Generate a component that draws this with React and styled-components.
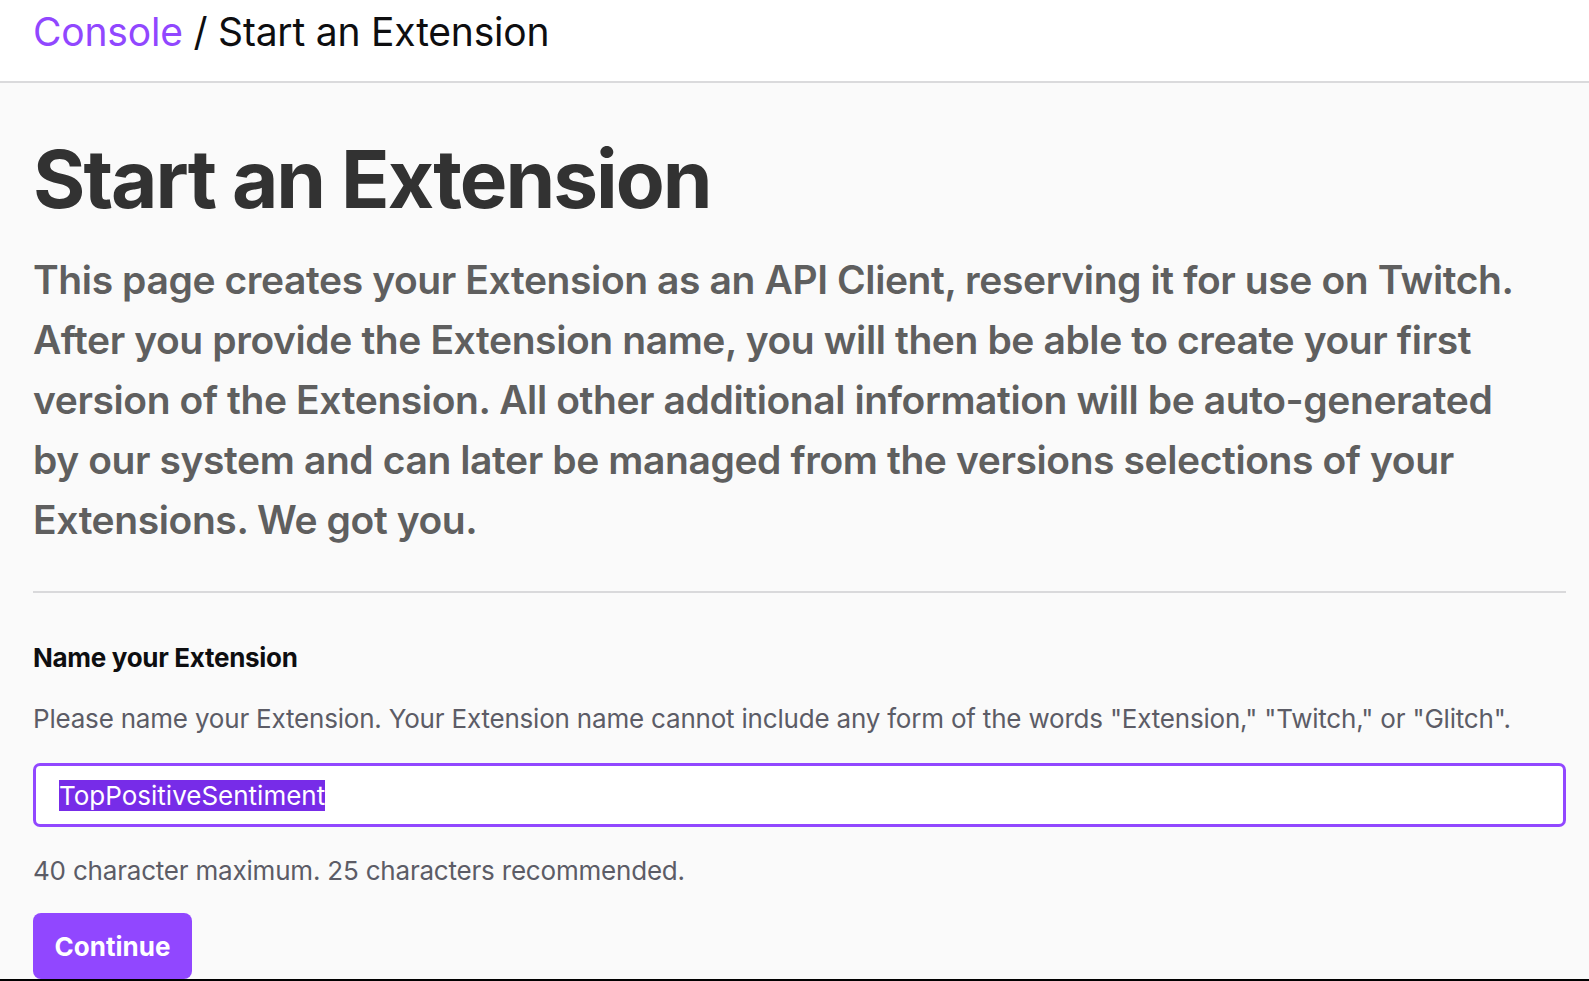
import React, { useEffect, useRef } from 'react';
import styled, { createGlobalStyle } from 'styled-components';

const GlobalStyle = createGlobalStyle`
  html, body {
    margin: 0;
    padding: 0;
  }
  body {
    background: #fafafa;
    font-family: Inter, "Noto Sans", "Liberation Sans", sans-serif;
    color: #0e0e10;
  }
`;

const Page = styled.div`
  display: flex;
  flex-direction: column;
  min-height: 100vh;
`;

const Header = styled.header`
  height: 71px;
  padding: 10px 23px 0 33px;
  background: #ffffff;
  border-bottom: 2px solid #dadadc;
`;

const Breadcrumb = styled.div`
  font-size: 39px;
  line-height: 44px;
  letter-spacing: -0.2px;
  color: #0e0e10;
`;

const Crumb = styled.a`
  color: #9147ff;
  text-decoration: none;
`;

const Main = styled.main`
  flex: 1;
  padding: 51px 23px 0 33px;
`;

const Title = styled.h1`
  margin: 0;
  font-size: 80px;
  line-height: 90px;
  font-weight: 700;
  letter-spacing: -2px;
  color: #323232;
`;

const Intro = styled.p`
  margin: 26px 0 0;
  font-size: 39px;
  line-height: 60px;
  font-weight: 600;
  letter-spacing: -0.4px;
  color: #5f5f5f;
`;

const Divider = styled.hr`
  margin: 41px 0 0;
  border: none;
  height: 2px;
  background: #d9d9db;
`;

const Form = styled.form`
  display: flex;
  flex-direction: column;
  align-items: flex-start;
  padding-top: 49px;
`;

const Label = styled.label`
  font-size: 26px;
  line-height: 32px;
  font-weight: 700;
  letter-spacing: -0.3px;
  color: #0e0e10;
`;

const Help = styled.div`
  margin-top: ${props => props.$gap}px;
  font-size: 26px;
  line-height: 30px;
  letter-spacing: -0.2px;
  color: #5c5c66;
`;

const Input = styled.input`
  box-sizing: border-box;
  margin-top: 29px;
  width: 100%;
  height: 64px;
  padding: 0 20px 0 23px;
  border: 3px solid #9147ff;
  border-radius: 7px;
  background: #ffffff;
  font-family: inherit;
  font-size: 26px;
  letter-spacing: 0;
  color: #0e0e10;
  outline: none;

  &::selection {
    background: #772ce8;
    color: #ffffff;
  }
`;

const Button = styled.button`
  margin-top: 27px;
  width: 159px;
  height: 66px;
  border: none;
  border-radius: 8px;
  background: #9147ff;
  color: #ffffff;
  font-family: inherit;
  font-size: 26px;
  font-weight: 700;
  letter-spacing: 0;
  cursor: pointer;
`;

const BottomEdge = styled.div`
  height: 2px;
  background: #000000;
`;

const App = () => {
  const inputRef = useRef(null);

  useEffect(() => {
    if (inputRef.current) {
      inputRef.current.focus();
      inputRef.current.select();
    }
  }, []);

  return (
    <Page>
      <GlobalStyle />
      <Header>
        <Breadcrumb>
          <Crumb href="#">Console</Crumb> / Start an Extension
        </Breadcrumb>
      </Header>
      <Main>
        <Title>Start an Extension</Title>
        <Intro>
          This page creates your Extension as an API Client, reserving it for use on Twitch.<br />
          After you provide the Extension name, you will then be able to create your first<br />
          version of the Extension. All other additional information will be auto-generated<br />
          by our system and can later be managed from the versions selections of your<br />
          Extensions. We got you.
        </Intro>
        <Divider />
        <Form onSubmit={(e) => e.preventDefault()}>
          <Label htmlFor="ext-name">Name your Extension</Label>
          <Help $gap={30}>
            Please name your Extension. Your Extension name cannot include any form of the words "Extension," "Twitch," or "Glitch".
          </Help>
          <Input id="ext-name" ref={inputRef} type="text" defaultValue="TopPositiveSentiment" />
          <Help $gap={29}>40 character maximum. 25 characters recommended.</Help>
          <Button type="submit">Continue</Button>
        </Form>
      </Main>
      <BottomEdge />
    </Page>
  );
};

export default App;
